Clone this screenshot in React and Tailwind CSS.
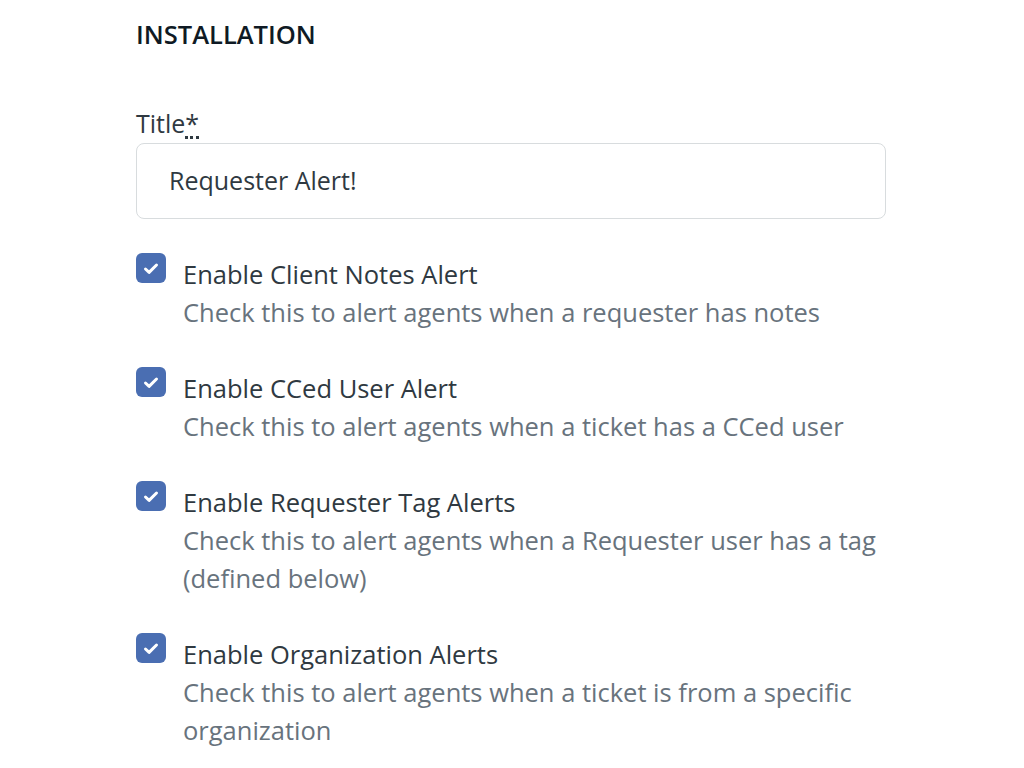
import React from "react";

const options = [
  {
    label: "Enable Client Notes Alert",
    hint: "Check this to alert agents when a requester has notes",
  },
  {
    label: "Enable CCed User Alert",
    hint: "Check this to alert agents when a ticket has a CCed user",
  },
  {
    label: "Enable Requester Tag Alerts",
    hint: "Check this to alert agents when a Requester user has a tag (defined below)",
  },
  {
    label: "Enable Organization Alerts",
    hint: "Check this to alert agents when a ticket is from a specific organization",
  },
];

const CheckBox = () => (
  <span className="-mt-[2px] flex h-[30px] w-[30px] shrink-0 items-center justify-center rounded-[6px] bg-[#4a6eb2]">
    <svg width="16" height="13" viewBox="0 0 16 13" fill="none">
      <path d="M2.5 7l3.6 3.4L13.5 3" stroke="#fff" strokeWidth="3" strokeLinecap="round" strokeLinejoin="round" />
    </svg>
  </span>
);

export default function App() {
  return (
    <div className="min-h-screen bg-white font-['Open_Sans',sans-serif] text-[#2f3941]">
      <div className="w-[750px] pl-[136px] pt-[17px] box-content">
        <h2 className="text-[25.5px] font-semibold leading-[34px] text-[#0f1a24]">INSTALLATION</h2>

        <div className="mt-[55px]">
          <label className="block text-[25px] leading-[34px] text-[#2f3941]">
            Title
            <abbr title="required" className="no-underline">
              <span className="border-b-[3px] border-dotted border-[#2f3941] leading-[26px] inline-block">*</span>
            </abbr>
          </label>
          <div className="mt-[3px] flex h-[76px] items-center rounded-[8px] border border-[#d8dcde] px-[32px] text-[25px] text-[#2f3941]">
            Requester Alert!
          </div>
        </div>

        <div className="mt-[36px] flex flex-col gap-[38px]">
          {options.map((o) => (
            <div key={o.label} className="flex gap-[17px]">
              <CheckBox />
              <div className="w-[703px] text-[25.5px] leading-[38px]">
                <div className="text-[#2f3941]">{o.label}</div>
                <div className="text-[#68737d]">{o.hint}</div>
              </div>
            </div>
          ))}
        </div>
      </div>
    </div>
  );
}
